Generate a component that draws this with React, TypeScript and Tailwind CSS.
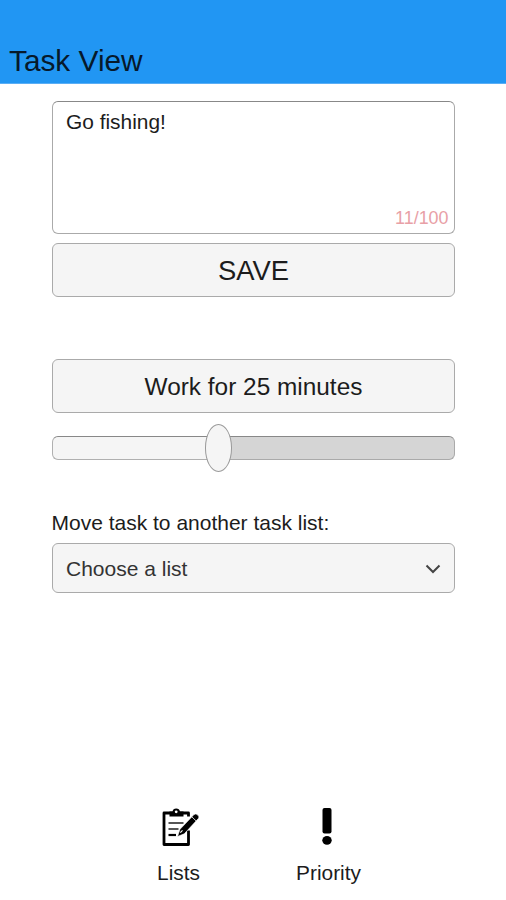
import { useState } from "react"

const MAX_LENGTH = 100

function ListsIcon() {
  return (
    <svg width="40" height="40" viewBox="0 0 40 40" fill="none">
      <path d="M29.5 23.5V37.5H5V6H29.5V9.5" stroke="black" strokeWidth="2.8" strokeLinejoin="round" />
      <path d="M10.5 4.5H13.5Q14 1.5 17.2 1.5T21 4.5H24.5V9.5H10.5Z" fill="black" />
      <circle cx="17.2" cy="4.8" r="1.4" fill="white" />
      <path d="M9.5 16H24.5M9.5 22H19.5" stroke="#555" strokeWidth="1.8" />
      <path d="M9.5 28H17" stroke="black" strokeWidth="2.2" />
      <path d="M18.5 29.5L21 22.3L35 7.6Q36.8 6 38.8 8T39.3 11.6L25.3 26.8Z" fill="black" stroke="white" strokeWidth="0.6" />
      <path d="M32.8 9.8L37.2 14" stroke="white" strokeWidth="0.8" />
      <path d="M21.3 25.6L23.5 23.4" stroke="white" strokeWidth="1.1" />
    </svg>
  )
}

function PriorityIcon() {
  return (
    <svg width="12" height="40" viewBox="0 0 12 40">
      <rect x="1.5" y="1" width="9" height="25.5" rx="2" fill="black" />
      <ellipse cx="6" cy="33.3" rx="4.7" ry="4.4" fill="black" />
    </svg>
  )
}

export default function App() {
  const [task, setTask] = useState("Go fishing!")
  const [minutes] = useState(25)

  return (
    <div className="flex h-[900px] w-[506px] flex-col bg-white font-['Liberation_Sans',Arial,sans-serif] text-[#1c1c1c]">
      <header className="flex h-[84px] items-end border-b border-[#5aaef5] bg-[#2196f3] pb-[5px] pl-[9px]">
        <h1 className="text-[29.8px] leading-[34px] text-[#06192b]">Task View</h1>
      </header>

      <main className="flex flex-1 flex-col px-[51.5px] pt-[16.5px]">
        <div className="relative h-[133px]">
          <textarea
            value={task}
            maxLength={MAX_LENGTH}
            onChange={(e) => setTask(e.target.value)}
            className="block h-full w-full resize-none rounded-[6px] border-[1.5px] border-[#aaa] border-t-[#888] bg-white px-[13.5px] py-[7px] text-[20.9px] leading-[26px] outline-none"
          />
          <span className="absolute right-[6px] bottom-[6px] text-[17.9px] leading-[20px] text-[#e8a0a6]">
            {task.length}/{MAX_LENGTH}
          </span>
        </div>

        <button className="mt-[9px] h-[54px] rounded-[6px] border-[1.5px] border-[#aaa] bg-[#f5f5f5] pt-[3px] pl-[1px] text-[27.4px]">SAVE</button>

        <button className="mt-[62.5px] h-[54px] rounded-[6px] border-[1.5px] border-[#aaa] bg-[#f5f5f5] pt-[3px] pl-[1px] text-[24.4px]">
          Work for {minutes} minutes
        </button>

        <div className="relative mt-[23px] flex h-[24px]">
          <div className="w-[167px] rounded-l-[6px] border-[1.5px] border-r-0 border-[#b0b0b0] border-t-[#888] bg-[#f5f5f5]" />
          <div className="flex-1 rounded-r-[6px] border-[1.5px] border-l-0 border-[#aaa] border-t-[#888] bg-[#d5d5d5]" />
          <div className="absolute top-[-12px] left-[153px] h-[48px] w-[27.5px] rounded-[50%] border-[1.5px] border-[#999] bg-[#f5f5f5]" />
        </div>

        <label className="mt-[50px] text-[21px] leading-[26px]">Move task to another task list:</label>
        <button className="mt-[7px] flex h-[50px] items-center justify-between rounded-[6px] border-[1.5px] border-[#aaa] bg-[#f5f5f5] pr-[13px] pl-[13.5px] text-[21px] text-[#333]">
          <span className="pt-[2px]">Choose a list</span>
          <svg className="mt-[2px]" width="16" height="10" viewBox="0 0 16 10" fill="none">
            <path d="M1.5 1.5L8 8L14.5 1.5" stroke="#444" strokeWidth="2" />
          </svg>
        </button>
      </main>

      <nav className="flex h-[93px] pl-[128.5px] text-[20.9px]">
        <button className="flex w-[100px] flex-col items-center gap-[14px]">
          <ListsIcon />
          <span className="leading-[24px]">Lists</span>
        </button>
        <button className="ml-[50px] flex w-[100px] flex-col items-center gap-[14px]">
          <span className="mr-[3px]">
            <PriorityIcon />
          </span>
          <span className="leading-[24px]">Priority</span>
        </button>
      </nav>
    </div>
  )
}
